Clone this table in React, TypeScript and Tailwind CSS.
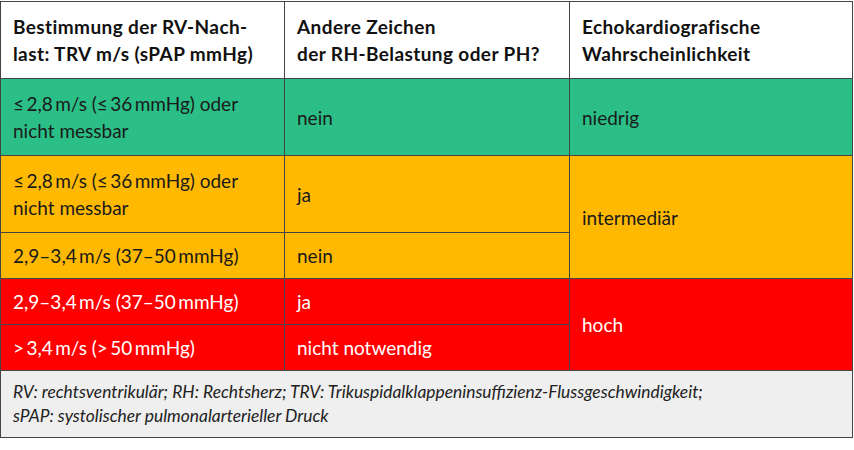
const font = { fontFamily: "Lato, 'Open Sans', sans-serif" };

const Cell = ({
  children,
  className = "",
}: {
  children: React.ReactNode;
  className?: string;
}) => (
  <div className={`flex items-center px-3 text-[19px] leading-[27px] ${className}`}>
    <div>{children}</div>
  </div>
);

export default function App() {
  return (
    <div className="w-[854px] h-[450px] bg-white pt-[1px]" style={font}>
      <div className="w-[853px] border border-[#444] bg-[#444]">
        <div className="grid grid-cols-[283px_284px_1fr] grid-rows-[76px_76px_76px_45px_45px_45px] gap-px">
          <Cell className="bg-white font-bold text-[#111] tracking-[0.4px]">
            Bestimmung der RV-Nach-
            <br />
            last: TRV m/s (sPAP mmHg)
          </Cell>
          <Cell className="bg-white font-bold text-[#111] tracking-[0.4px]">
            Andere Zeichen
            <br />
            der RH-Belastung oder PH?
          </Cell>
          <Cell className="bg-white font-bold text-[#111] tracking-[0.4px]">
            Echokardiografische
            <br />
            Wahrscheinlichkeit
          </Cell>

          <Cell className="bg-[#2bbf87] text-[#1a1a1a]">
            ≤{"\u2009"}2,8{"\u2009"}m/s (≤{"\u2009"}36{"\u2009"}mmHg) oder
            <br />
            nicht messbar
          </Cell>
          <Cell className="bg-[#2bbf87] text-[#1a1a1a]">nein</Cell>
          <Cell className="bg-[#2bbf87] text-[#1a1a1a]">niedrig</Cell>

          <Cell className="bg-[#ffb900] text-[#1a1a1a]">
            ≤{"\u2009"}2,8{"\u2009"}m/s (≤{"\u2009"}36{"\u2009"}mmHg) oder
            <br />
            nicht messbar
          </Cell>
          <Cell className="bg-[#ffb900] text-[#1a1a1a]">ja</Cell>
          <Cell className="bg-[#ffb900] text-[#1a1a1a] row-span-2">intermediär</Cell>

          <Cell className="bg-[#ffb900] text-[#1a1a1a]">
            2,9–3,4{"\u2009"}m/s (37–50{"\u2009"}mmHg)
          </Cell>
          <Cell className="bg-[#ffb900] text-[#1a1a1a]">nein</Cell>

          <Cell className="bg-[#ff0000] text-white">
            2,9–3,4{"\u2009"}m/s (37–50{"\u2009"}mmHg)
          </Cell>
          <Cell className="bg-[#ff0000] text-white">ja</Cell>
          <Cell className="bg-[#ff0000] text-white row-span-2">hoch</Cell>

          <Cell className="bg-[#ff0000] text-white">
            &gt;{"\u2009"}3,4{"\u2009"}m/s (&gt;{"\u2009"}50{"\u2009"}mmHg)
          </Cell>
          <Cell className="bg-[#ff0000] text-white">nicht notwendig</Cell>
        </div>
        <div className="mt-px h-[66px] bg-[#efefef] px-3 flex items-center">
          <p className="italic text-[17.4px] leading-[24px] text-[#222]">
            RV: rechtsventrikulär; RH: Rechtsherz; TRV: Trikuspidalklappeninsuffizienz-Flussgeschwindigkeit;
            <br />
            sPAP: systolischer pulmonalarterieller Druck
          </p>
        </div>
      </div>
    </div>
  );
}
